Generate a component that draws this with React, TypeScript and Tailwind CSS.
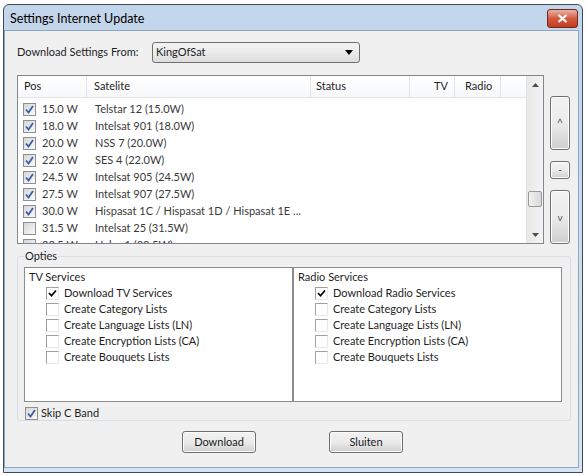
import { useState } from 'react';

type Sat = { pos: string; name: string; checked: boolean };

const sats: Sat[] = [
  { pos: '15.0 W', name: 'Telstar 12 (15.0W)', checked: true },
  { pos: '18.0 W', name: 'Intelsat 901 (18.0W)', checked: true },
  { pos: '20.0 W', name: 'NSS 7 (20.0W)', checked: true },
  { pos: '22.0 W', name: 'SES 4 (22.0W)', checked: true },
  { pos: '24.5 W', name: 'Intelsat 905 (24.5W)', checked: true },
  { pos: '27.5 W', name: 'Intelsat 907 (27.5W)', checked: true },
  { pos: '30.0 W', name: 'Hispasat 1C / Hispasat 1D / Hispasat 1E ...', checked: true },
  { pos: '31.5 W', name: 'Intelsat 25 (31.5W)', checked: false },
  { pos: '33.5 W', name: 'Hylas 1 (33.5W)', checked: false },
];

const serviceOptions = [
  'Create Category Lists',
  'Create Language Lists (LN)',
  'Create Encryption Lists (CA)',
  'Create Bouquets Lists',
];

function VistaCheck({ checked }: { checked: boolean }) {
  return (
    <span className="w-[13px] h-[13px] border border-[#8e8f8f] bg-gradient-to-br from-[#d6d6d6] to-[#fbfbfb] flex items-center justify-center shrink-0">
      {checked ? (
        <svg width="9" height="9" viewBox="0 0 9 9">
          <path d="M1 4.5 L3.5 7.5 L8 1" fill="none" stroke="#3a5ea8" strokeWidth="1.8" />
        </svg>
      ) : null}
    </span>
  );
}

function ClassicCheck({ checked }: { checked: boolean }) {
  return (
    <span className="w-[13px] h-[13px] border-t border-l border-[#a0a0a0] border-r border-b border-r-[#e8e8e8] border-b-[#e8e8e8] bg-white flex items-center justify-center shrink-0">
      {checked ? (
        <svg width="9" height="9" viewBox="0 0 9 9">
          <path d="M1 4 L3.5 6.8 L8 1.5" fill="none" stroke="#000" strokeWidth="1.7" />
        </svg>
      ) : null}
    </span>
  );
}

function ServicePanel({ title, first }: { title: string; first: string }) {
  return (
    <div className="flex-1 border border-[#8c8c8c] bg-white pt-[1px] pl-[4px]">
      <div className="leading-[16px]">{title}</div>
      <div className="pl-[17px] flex flex-col">
        <label className="flex items-center gap-[5px] h-[16px]">
          <ClassicCheck checked />
          <span>{first}</span>
        </label>
        {serviceOptions.map((o) => (
          <label key={o} className="flex items-center gap-[5px] h-[16px]">
            <ClassicCheck checked={false} />
            <span>{o}</span>
          </label>
        ))}
      </div>
    </div>
  );
}

function AeroButton({ children, className }: { children: React.ReactNode; className?: string }) {
  return (
    <button
      className={`border border-[#707070] rounded-[3px] bg-gradient-to-b from-[#f2f2f2] via-[#ebebeb] to-[#cfcfcf] text-[#1a1a1a] flex items-center justify-center shadow-[inset_0_0_0_1px_#fcfcfc] ${className ?? ''}`}
    >
      {children}
    </button>
  );
}

export default function App() {
  const [source] = useState('KingOfSat');

  return (
    <div className="w-[586px] h-[476px] bg-white overflow-hidden pt-[4px] pl-[3px] text-[11px] text-[#1e1e1e] font-['Lato',sans-serif]">
      <div className="w-[580px] h-[469px] border border-[#3c4a5a] rounded-t-[6px] bg-gradient-to-b from-[#c3d5ea] to-[#d6e4f3] flex flex-col pr-[3px] pb-[4px]">
        {/* title bar */}
        <div className="h-[25px] shrink-0 flex items-center justify-between pl-[6px] pr-[1px]">
          <span className="text-[12.5px] text-[#000] mt-[4px]">Settings Internet Update</span>
          <button className="w-[31px] h-[19px] mt-[2px] rounded-[3px] border border-[#6d2a20] bg-gradient-to-b from-[#eab2a4] via-[#d25a40] to-[#c43a20] flex items-center justify-center">
            <svg width="11" height="9" viewBox="0 0 11 9">
              <path d="M1.5 1 L9.5 8 M9.5 1 L1.5 8" stroke="#fff" strokeWidth="2.2" />
            </svg>
          </button>
        </div>

        {/* client area */}
        <div className="flex-1 bg-[#f0f0f0] border border-[#8fa6c1] flex flex-col pl-[12px] pr-[8px] pt-[10px]">
          <div className="flex items-center h-[22px]">
            <span className="w-[135px]">Download Settings From:</span>
            <div className="w-[208px] h-[21px] border border-[#707070] rounded-[3px] bg-gradient-to-b from-[#f2f2f2] via-[#ebebeb] to-[#dcdcdc] flex items-center justify-between pl-[3px] pr-[6px]">
              <span>{source}</span>
              <svg width="8" height="5" viewBox="0 0 8 5">
                <path d="M0 0 H8 L4 5 Z" fill="#000" />
              </svg>
            </div>
          </div>

          <div className="flex mt-[12px] gap-[6px]">
            {/* list view */}
            <div className="w-[527px] h-[169px] border border-[#828790] bg-white flex overflow-hidden">
              <div className="flex-1 flex flex-col overflow-hidden">
                <div className="h-[22px] shrink-0 flex bg-gradient-to-b from-white to-[#f7f8fa] border-b border-[#e5e5e5] text-[#1e1e1e]">
                  <div className="w-[69px] pl-[6px] border-r border-[#e5e5e5] flex items-center">Pos</div>
                  <div className="w-[224px] pl-[7px] border-r border-[#e5e5e5] flex items-center">Satelite</div>
                  <div className="w-[99px] pl-[5px] border-r border-[#e5e5e5] flex items-center">Status</div>
                  <div className="w-[45px] pr-[6px] border-r border-[#e5e5e5] flex items-center justify-end">TV</div>
                  <div className="w-[46px] pl-[10px] border-r border-[#e5e5e5] flex items-center">Radio</div>
                  <div className="flex-1" />
                </div>
                <div className="flex flex-col pt-[3px]">
                  {sats.map((s) => (
                    <div key={s.pos} className="h-[17px] shrink-0 flex items-center text-[#3a3a3a]">
                      <div className="w-[69px] flex items-center pl-[5px] gap-[6px]">
                        <VistaCheck checked={s.checked} />
                        <span>{s.pos}</span>
                      </div>
                      <div className="pl-[8px] whitespace-nowrap">{s.name}</div>
                    </div>
                  ))}
                </div>
              </div>
              {/* scrollbar */}
              <div className="w-[17px] shrink-0 bg-gradient-to-r from-[#e8e8e8] to-[#f4f4f4] border-l border-[#e3e3e3] flex flex-col items-center">
                <div className="h-[17px] flex items-center justify-center">
                  <svg width="7" height="4" viewBox="0 0 7 4">
                    <path d="M0 4 L3.5 0 L7 4 Z" fill="#4d4d4d" />
                  </svg>
                </div>
                <div className="flex-1 w-full relative">
                  <div className="absolute left-[1px] right-[1px] top-[98px] h-[16px] border border-[#9a9a9a] rounded-[2px] bg-gradient-to-r from-[#f2f2f2] to-[#d8d8d8]" />
                </div>
                <div className="h-[17px] flex items-center justify-center">
                  <svg width="7" height="4" viewBox="0 0 7 4">
                    <path d="M0 0 L7 0 L3.5 4 Z" fill="#4d4d4d" />
                  </svg>
                </div>
              </div>
            </div>

            {/* side buttons */}
            <div className="w-[20px] flex flex-col pt-[21px]">
              <AeroButton className="h-[54px] w-[20px] text-[11px] text-[#555]">^</AeroButton>
              <AeroButton className="h-[18px] w-[20px] mt-[11px] text-[10px] leading-none pb-[3px]">-</AeroButton>
              <AeroButton className="h-[54px] w-[20px] mt-[11px] text-[10px] text-[#555]">v</AeroButton>
            </div>
          </div>

          {/* Opties group */}
          <div className="mt-[5px] w-[554px] h-[172px] relative">
            <div className="absolute left-0 right-0 top-[7px] bottom-0 border border-[#d5dfe5] rounded-[3px]" />
            <div className="relative flex flex-col h-full">
              <div className="ml-[7px] px-[1px] bg-[#f0f0f0] self-start leading-[14px]">Opties</div>
              <div className="flex mt-[4px] ml-[7px] mr-[9px] h-[135px]">
                <ServicePanel title="TV Services" first="Download TV Services" />
                <ServicePanel title="Radio Services" first="Download Radio Services" />
              </div>
              <label className="flex items-center gap-[3px] ml-[8px] mt-[4px] h-[14px]">
                <VistaCheck checked />
                <span>Skip C Band</span>
              </label>
            </div>
          </div>

          <div className="flex mt-[10px] pl-[165px] gap-[73px]">
            <AeroButton className="w-[74px] h-[22px] text-[11px]">Download</AeroButton>
            <AeroButton className="w-[74px] h-[22px] text-[11px]">Sluiten</AeroButton>
          </div>
        </div>
      </div>
    </div>
  );
}
